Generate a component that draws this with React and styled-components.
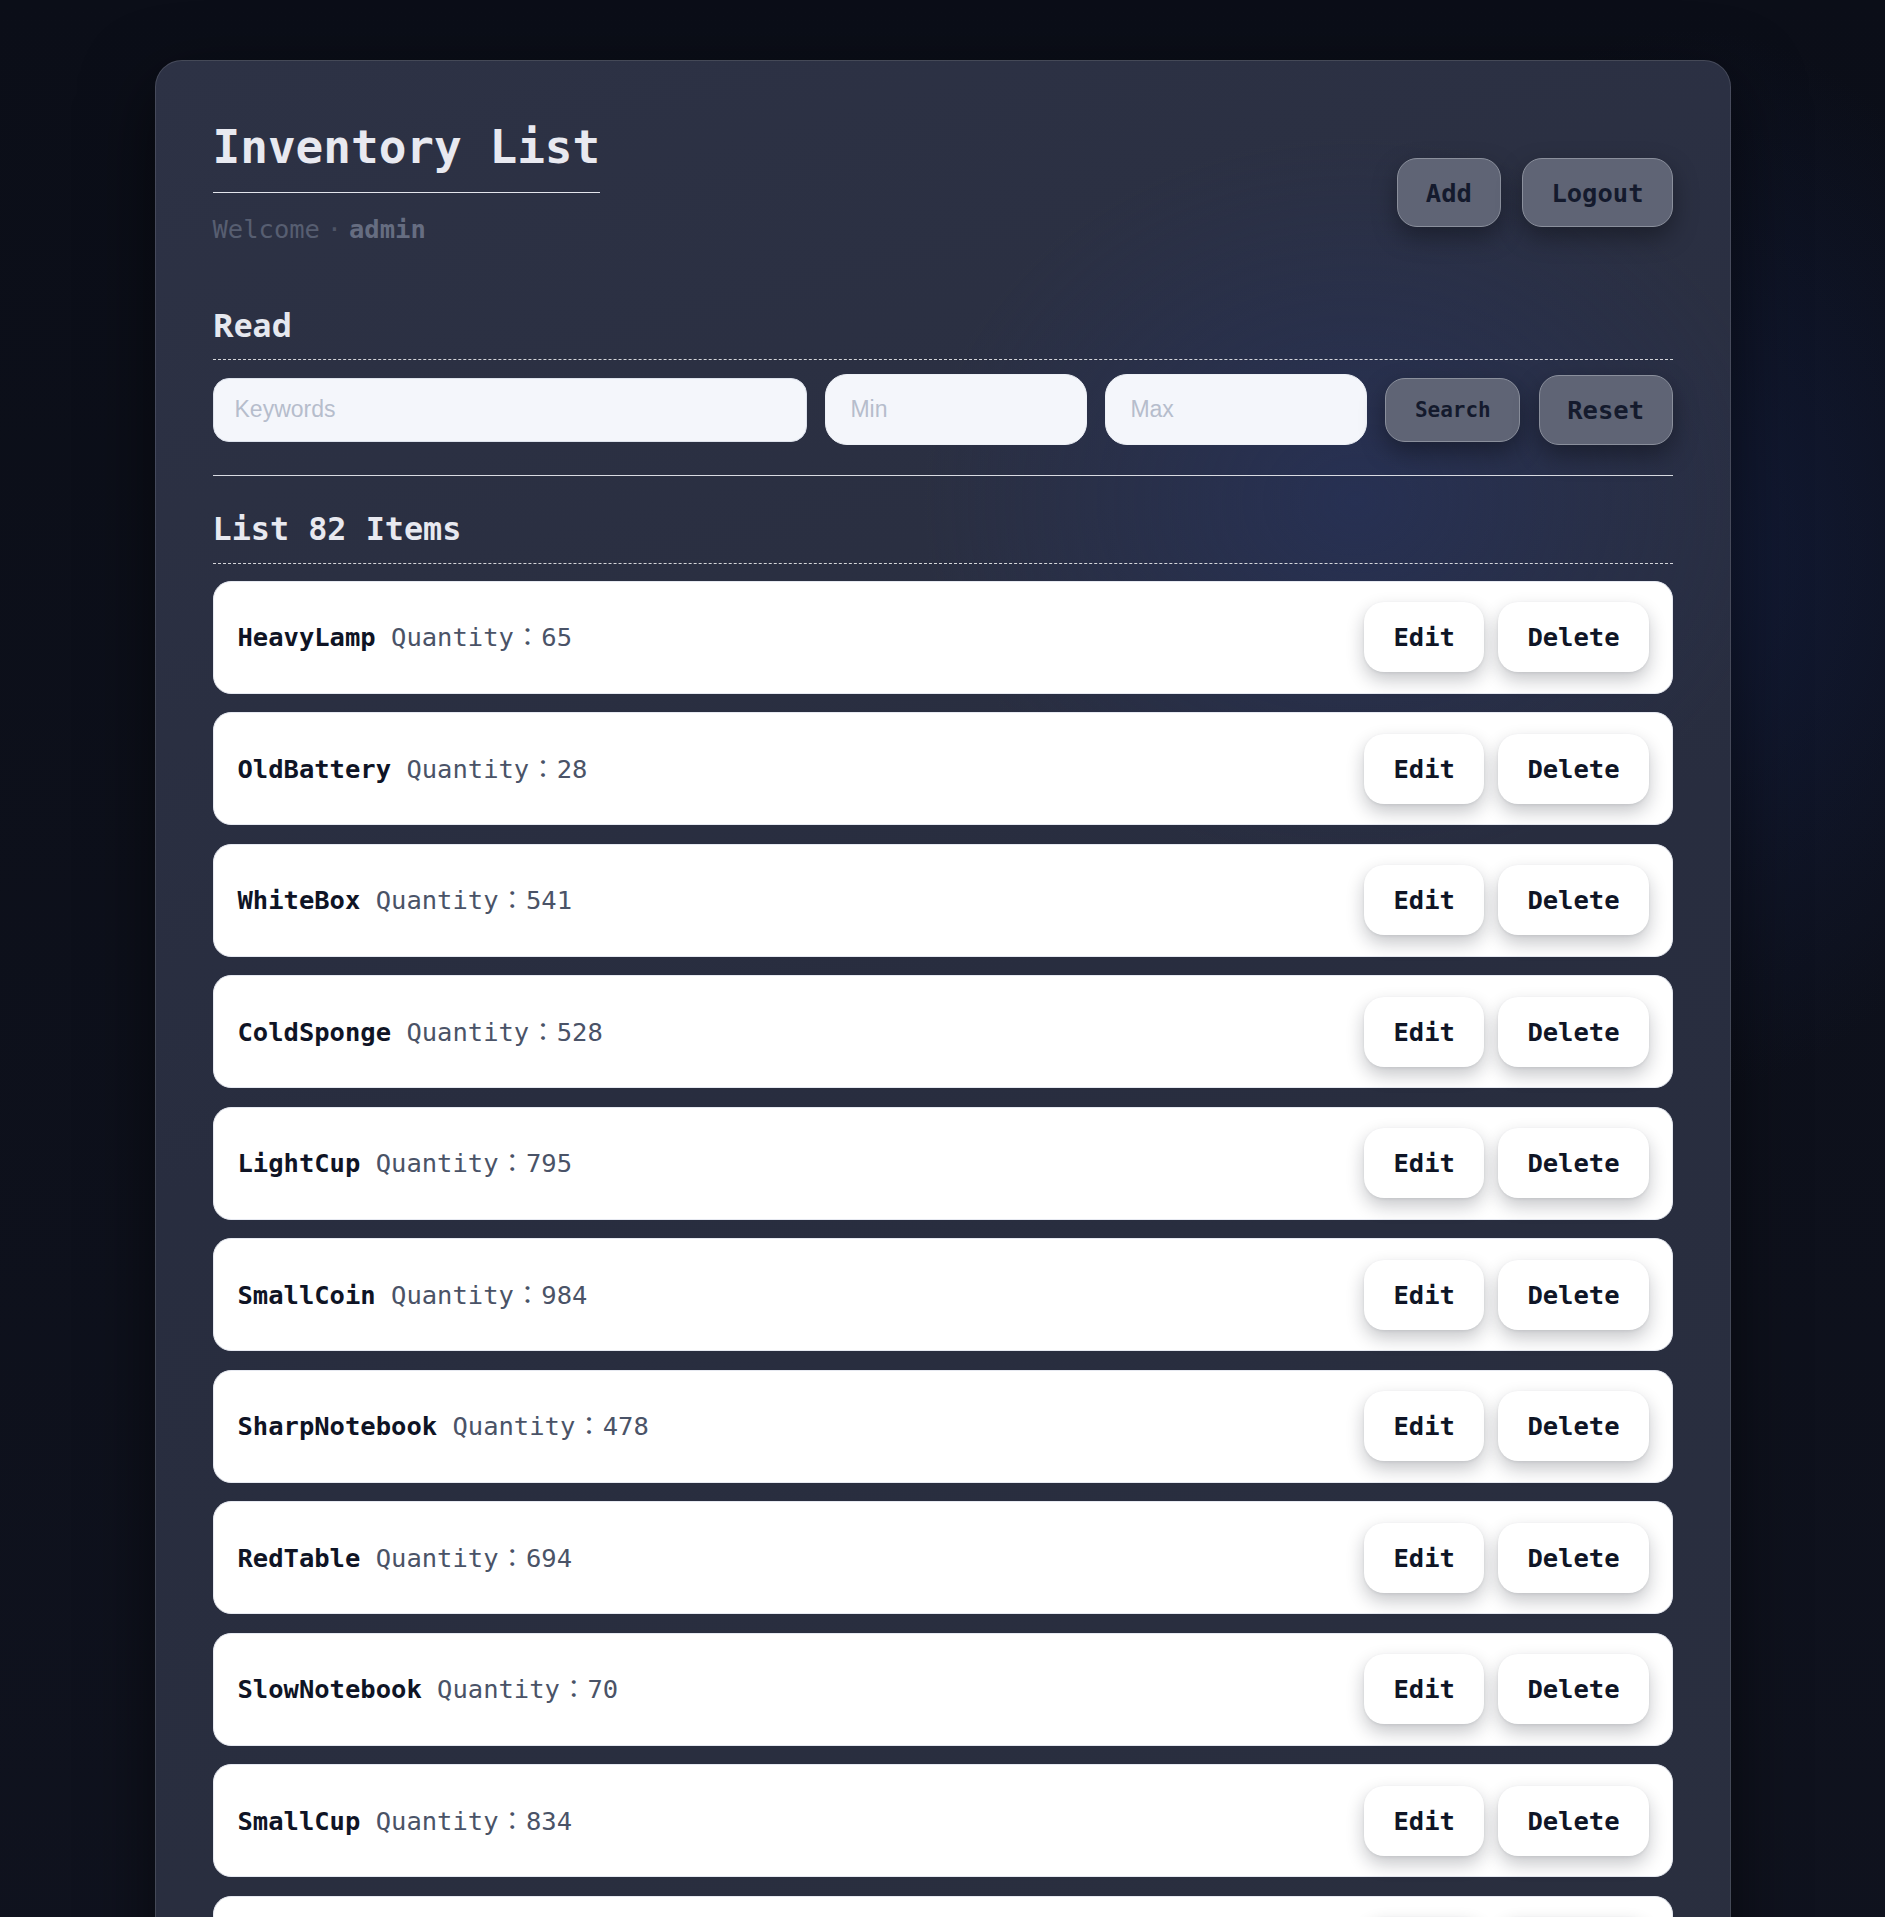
import React from "react";
import styled, { createGlobalStyle } from "styled-components";

const GlobalStyle = createGlobalStyle`
  html, body {
    margin: 0;
    padding: 0;
    background: #0c0f19;
  }
  * { box-sizing: border-box; }
`;

const MONO = `"DejaVu Sans Mono", "Noto Sans CJK JP", "Liberation Mono", monospace`;

const Page = styled.div`
  min-height: 100vh;
  padding: 60px 0 60px;
  background:
    radial-gradient(ellipse 520px 760px at 1690px 560px, rgba(28, 44, 96, 0.42), transparent 70%),
    linear-gradient(180deg, #0b0e18 0%, #10131f 100%);
  font-family: ${MONO};
`;

const Card = styled.main`
  width: 1576px;
  margin: 0 auto;
  padding: 59px 57px 40px;
  border: 1px solid rgba(255, 255, 255, 0.13);
  border-radius: 27px;
  background:
    radial-gradient(ellipse 620px 520px at 1200px 440px, rgba(36, 50, 100, 0.5), transparent 70%),
    linear-gradient(165deg, #2d3245 0%, #282d3f 45%, #2a2f3f 100%);
  box-shadow: 0 24px 70px rgba(0, 0, 0, 0.55);
`;

const Header = styled.header`
  display: flex;
  justify-content: space-between;
  align-items: flex-start;
`;

const TitleBlock = styled.div`
  display: flex;
  flex-direction: column;
  align-items: flex-start;
`;

const Title = styled.h1`
  margin: 0;
  padding-bottom: 18px;
  border-bottom: 1px solid #e3e5ec;
  font-family: ${MONO};
  font-size: 46px;
  line-height: 54px;
  font-weight: 700;
  color: #e8e9f0;
`;

const Welcome = styled.p`
  margin: 18px 0 0;
  font-size: 25.5px;
  line-height: 36px;
  height: 36px;
  color: #575e71;
`;

const Sep = styled.span`
  display: inline-block;
  width: 29px;
  text-align: center;
  color: #4e5466;
`;

const UserName = styled.b`
  font-weight: 700;
  color: #666d81;
`;

const HeaderActions = styled.div`
  display: flex;
  gap: 21.5px;
  margin-top: 38px;
`;

const GhostButton = styled.button`
  height: ${(p) => p.$h || 69}px;
  padding: 0 ${(p) => p.$px || 28}px;
  border: 1px solid #8a8f9c;
  border-radius: 20px;
  background: #5f6475;
  color: #141a2d;
  font-family: ${MONO};
  font-size: ${(p) => p.$fs || 25.5}px;
  font-weight: 700;
  cursor: pointer;
  box-shadow: 0 10px 24px rgba(0, 0, 0, 0.35);
  flex: none;
`;

const Section = styled.section`
  margin-top: ${(p) => p.$mt}px;
`;

const ReadHeading = styled.h2`
  margin: 0;
  padding-bottom: 15px;
  border-bottom: 1px dashed rgba(255, 255, 255, 0.8);
  font-family: "Open Sans", "Noto Sans", sans-serif;
  font-size: 32px;
  line-height: 38px;
  font-weight: 700;
  color: #e6e8ef;
`;

const SearchRow = styled.div`
  display: flex;
  align-items: center;
  gap: 18.5px;
  margin-top: 14px;
  padding-bottom: 29.5px;
  border-bottom: 1px solid #d9dbe2;
`;

const TextInput = styled.input`
  height: ${(p) => (p.$wide ? 64 : 71)}px;
  ${(p) => (p.$wide ? "flex: 1;" : "width: 261.5px; flex: none;")}
  padding: 0 ${(p) => (p.$wide ? 21 : 24)}px;
  border: 1px solid ${(p) => (p.$wide ? "#dde2ec" : "#eef1f7")};
  border-radius: ${(p) => (p.$wide ? 16 : 22)}px;
  background: #f4f6fb;
  font-family: "Liberation Sans", Arial, sans-serif;
  font-size: 23px;
  color: #1e2535;
  outline: none;
  &::placeholder {
    color: #b6bdcc;
  }
`;

const ListHeading = styled.h2`
  margin: 0;
  padding-bottom: 15px;
  border-bottom: 1px dashed rgba(255, 255, 255, 0.8);
  font-family: ${MONO};
  font-size: 31.8px;
  line-height: 38px;
  font-weight: 700;
  color: #e8e9f0;
`;

const List = styled.ul`
  list-style: none;
  margin: 17px 0 0;
  padding: 0;
  display: flex;
  flex-direction: column;
  gap: 18.5px;
`;

const Row = styled.li`
  height: 113px;
  display: flex;
  align-items: center;
  justify-content: space-between;
  padding: 0 23px 0 24px;
  background: #ffffff;
  border: 1px solid #e6e9f1;
  border-radius: 18px;
`;

const RowText = styled.div`
  font-size: 25.5px;
  line-height: 36px;
  height: 36px;
  color: #4a5367;
  white-space: pre;
`;

const ItemName = styled.span`
  font-weight: 700;
  color: #0f1425;
`;

const Colon = styled.span`
  display: inline-block;
  width: 27.5px;
  text-align: center;
`;

const RowActions = styled.div`
  display: flex;
  gap: 14.5px;
`;

const LightButton = styled.button`
  height: 70px;
  padding: 0 29px;
  border: none;
  border-radius: 20px;
  background: #ffffff;
  color: #0f1526;
  font-family: ${MONO};
  font-size: 25.5px;
  font-weight: 700;
  cursor: pointer;
  box-shadow: 0 8px 18px rgba(15, 20, 35, 0.24), 0 1px 3px rgba(15, 20, 35, 0.08);
`;

const items = [
  ["HeavyLamp", 65],
  ["OldBattery", 28],
  ["WhiteBox", 541],
  ["ColdSponge", 528],
  ["LightCup", 795],
  ["SmallCoin", 984],
  ["SharpNotebook", 478],
  ["RedTable", 694],
  ["SlowNotebook", 70],
  ["SmallCup", 834],
  ["BigChair", 312],
  ["BlueLamp", 157],
];

export default function App() {
  return (
    <>
      <GlobalStyle />
      <Page>
        <Card>
          <Header>
            <TitleBlock>
              <Title>Inventory List</Title>
              <Welcome>
                Welcome<Sep>·</Sep>
                <UserName>admin</UserName>
              </Welcome>
            </TitleBlock>
            <HeaderActions>
              <GhostButton>Add</GhostButton>
              <GhostButton>Logout</GhostButton>
            </HeaderActions>
          </Header>

          <Section $mt={59}>
            <ReadHeading>Read</ReadHeading>
            <SearchRow>
              <TextInput $wide placeholder="Keywords" />
              <TextInput placeholder="Min" />
              <TextInput placeholder="Max" />
              <GhostButton $h={64} $fs={21} $px={28.5}>
                Search
              </GhostButton>
              <GhostButton $h={70} $px={27.5}>
                Reset
              </GhostButton>
            </SearchRow>
          </Section>

          <Section $mt={34}>
            <ListHeading>List 82 Items</ListHeading>
            <List>
              {items.map(([name, qty]) => (
                <Row key={name}>
                  <RowText>
                    <ItemName>{name}</ItemName> Quantity<Colon>：</Colon>
                    {qty}
                  </RowText>
                  <RowActions>
                    <LightButton>Edit</LightButton>
                    <LightButton>Delete</LightButton>
                  </RowActions>
                </Row>
              ))}
            </List>
          </Section>
        </Card>
      </Page>
    </>
  );
}
